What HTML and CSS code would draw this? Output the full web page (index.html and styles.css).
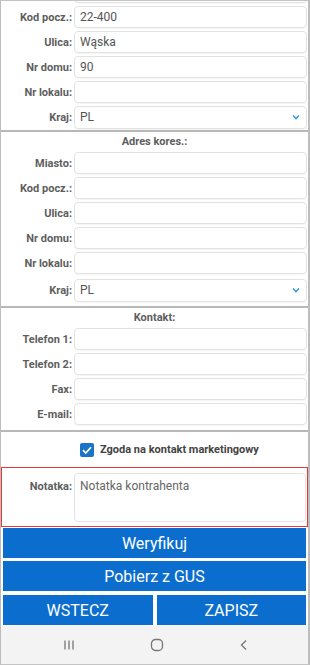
FILE: index.html
```html
<!DOCTYPE html>
<html lang="pl">
<head>
<meta charset="utf-8">
<link rel="stylesheet" href="styles.css">
</head>
<body>
<div class="screen">
  <div class="scroll">
    <div class="form">
      <div class="section first">
        <div class="row"><span class="lbl"></span><div class="field"></div></div>
        <div class="row"><label class="lbl">Kod pocz.:</label><div class="field">22-400</div></div>
        <div class="row"><label class="lbl">Ulica:</label><div class="field">Wąska</div></div>
        <div class="row"><label class="lbl">Nr domu:</label><div class="field">90</div></div>
        <div class="row"><label class="lbl">Nr lokalu:</label><div class="field"></div></div>
        <div class="row"><label class="lbl">Kraj:</label><div class="field select">PL<svg class="chev" viewBox="0 0 8 6" width="8" height="6"><path d="M1 1.5 L4 4.5 L7 1.5" fill="none" stroke="#3d9be0" stroke-width="1.6"/></svg></div></div>
      </div>
      <div class="sep"></div>
      <div class="head">Adres kores.:</div>
      <div class="section">
        <div class="row"><label class="lbl">Miasto:</label><div class="field"></div></div>
        <div class="row"><label class="lbl">Kod pocz.:</label><div class="field"></div></div>
        <div class="row"><label class="lbl">Ulica:</label><div class="field"></div></div>
        <div class="row"><label class="lbl">Nr domu:</label><div class="field"></div></div>
        <div class="row"><label class="lbl">Nr lokalu:</label><div class="field"></div></div>
        <div class="row kraj2"><label class="lbl">Kraj:</label><div class="field select">PL<svg class="chev" viewBox="0 0 8 6" width="8" height="6"><path d="M1 1.5 L4 4.5 L7 1.5" fill="none" stroke="#3d9be0" stroke-width="1.6"/></svg></div></div>
      </div>
      <div class="sep sep2"></div>
      <div class="head">Kontakt:</div>
      <div class="section">
        <div class="row"><label class="lbl">Telefon 1:</label><div class="field"></div></div>
        <div class="row"><label class="lbl">Telefon 2:</label><div class="field"></div></div>
        <div class="row"><label class="lbl">Fax:</label><div class="field"></div></div>
        <div class="row"><label class="lbl">E-mail:</label><div class="field"></div></div>
      </div>
      <div class="sep sep2"></div>
      <div class="consent">
        <span class="check"><svg viewBox="0 0 14 14" width="14" height="14"><rect x="0" y="0" width="14" height="14" rx="2" fill="#1a73c9"/><path d="M3 7.2 L5.8 10 L11 4.2" fill="none" stroke="#fff" stroke-width="1.7"/></svg></span>
        <span class="consent-text">Zgoda na kontakt marketingowy</span>
      </div>
      <div class="note">
        <label class="lbl note-lbl">Notatka:</label>
        <div class="area">Notatka kontrahenta</div>
      </div>
    </div>
    <div class="buttons">
      <button class="btn">Weryfikuj</button>
      <button class="btn">Pobierz z GUS</button>
      <div class="btn-pair">
        <button class="btn caps">WSTECZ</button>
        <button class="btn caps">ZAPISZ</button>
      </div>
    </div>
  </div>
  <nav class="navbar">
    <svg class="nav-ic" viewBox="0 0 12 12" width="12" height="12"><path d="M2 1.5 V10.5 M6 1.5 V10.5 M10 1.5 V10.5" stroke="#777" stroke-width="1.3" fill="none"/></svg>
    <svg class="nav-ic" viewBox="0 0 14 14" width="14" height="14"><rect x="1.5" y="1.5" width="11" height="11" rx="4" fill="none" stroke="#777" stroke-width="1.3"/></svg>
    <svg class="nav-ic" viewBox="0 0 12 12" width="12" height="12"><path d="M8 1.5 L3.5 6 L8 10.5" stroke="#777" stroke-width="1.3" fill="none"/></svg>
  </nav>
</div>
</body>
</html>
```

FILE: styles.css
```css
* { box-sizing: border-box; }
html, body { margin: 0; padding: 0; background: #fff; }
body { font-family: Roboto, "Noto Sans", "Liberation Sans", sans-serif; }

.screen {
  width: 310px;
  height: 665px;
  border-top: 1px solid #c4c4c4;
  border-left: 1px solid #bdbdbd;
  border-right: 2px solid #bdbdbd;
  border-bottom: 1px solid #c4c4c4;
  display: flex;
  flex-direction: column;
  overflow: hidden;
  background: #fff;
}

.scroll {
  flex: 1;
  display: flex;
  flex-direction: column;
  overflow: hidden;
}

.form {
  display: flex;
  flex-direction: column;
}

.section {
  display: flex;
  flex-direction: column;
  gap: 3px;
}
.section.first { margin-top: -20px; }

.row {
  display: flex;
  align-items: center;
  height: 22px;
}

.lbl {
  width: 73px;
  flex: none;
  padding-right: 2px;
  text-align: right;
  font-weight: bold;
  font-size: 11px;
  color: #5e5e5e;
}

.field {
  flex: 1;
  height: 22px;
  margin-right: 1px;
  border: 1px solid #e2e2e2;
  border-radius: 4px;
  box-shadow: 0 1px 1px rgba(0,0,0,0.04);
  font-size: 12px;
  color: #555;
  padding-left: 5px;
  display: flex;
  align-items: center;
}
.select { height: 23px; justify-content: space-between; padding-right: 6px; }
.chev { display: block; }
.kraj2 { margin-top: 2px; }

.sep {
  height: 2px;
  background: #b8b8b8;
  margin-top: 2px;
}
.sep2 { margin-top: 5px; }

.head {
  height: 20px;
  line-height: 20px;
  text-align: center;
  font-weight: bold;
  font-size: 11px;
  color: #5e5e5e;
}

.consent {
  height: 35px;
  display: flex;
  align-items: center;
  padding-left: 79px;
  gap: 6px;
}
.check { display: flex; }
.consent-text {
  font-weight: bold;
  font-size: 11px;
  color: #444;
}

.note {
  height: 60px;
  border: 1px solid #e53935;
  display: flex;
  align-items: flex-start;
  padding: 5px 1px 4px 0;
}
.note-lbl { width: 72px; margin-top: 7px; }
.area {
  flex: 1;
  height: 49px;
  border: 1px solid #e2e2e2;
  border-radius: 4px;
  font-size: 12px;
  color: #666;
  padding: 5px 5px;
}

.buttons {
  display: flex;
  flex-direction: column;
  gap: 3px;
  padding: 1px 2px 0 2px;
}
.btn {
  height: 30px;
  border: none;
  margin: 0;
  background: #0b6ecf;
  color: #fff;
  font-family: inherit;
  font-size: 16px;
  padding: 0;
}
.btn-pair {
  display: flex;
  gap: 4px;
  margin-top: 1px;
}
.btn-pair .btn { flex: 1; }

.navbar {
  height: 38px;
  flex: none;
  background: #f3f3f3;
  display: flex;
  align-items: center;
  justify-content: space-between;
  padding: 0 58px 0 62px;
}
.nav-ic { display: block; }
```
